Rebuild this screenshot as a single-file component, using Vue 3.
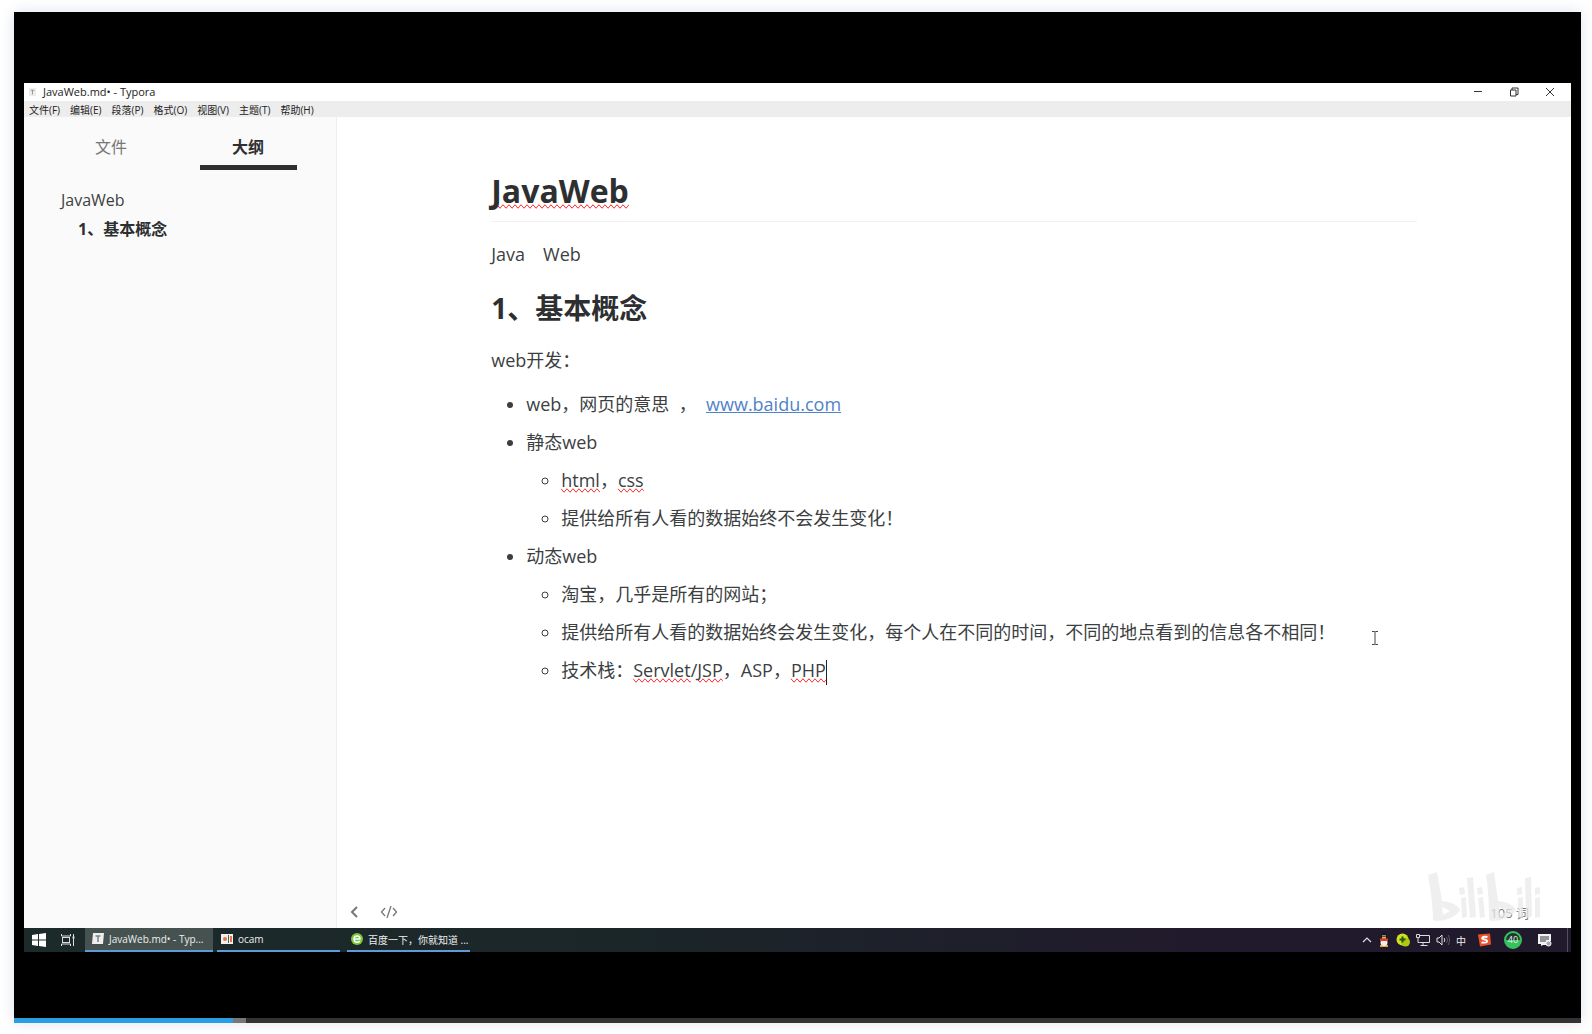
<script setup>
const menus = ['文件(F)', '编辑(E)', '段落(P)', '格式(O)', '视图(V)', '主题(T)', '帮助(H)']
const played = 14
const buffered = 1
</script>

<template>
  <div class="page">
    <section class="player">
      <div class="desktop">
        <header class="titlebar">
          <svg class="app-icon" viewBox="0 0 10 12"><path d="M0 0h10v12H0z" fill="#ededed" /><path d="M2.500 3.500h5M5 3.500v6" stroke="#777" fill="none" /></svg>
          <span class="title">JavaWeb.md• - Typora</span>
          <div class="controls">
            <button aria-label="最小化"><svg viewBox="0 0 10 10"><path d="M1 4.500h8" /></svg></button>
            <button aria-label="还原"><svg viewBox="0 0 10 10"><path d="M1.500 3h5.500v6H1.500zM3 3V1h6v6.500H7" /></svg></button>
            <button aria-label="关闭"><svg viewBox="0 0 10 10"><path d="M1 1l8 8M9 1L1 9" /></svg></button>
          </div>
        </header>
        <nav class="menubar">
          <button v-for="m in menus" :key="m">{{ m }}</button>
        </nav>
        <div class="body">
          <aside class="sidebar">
            <div class="tabs">
              <button>文件</button>
              <button class="active">大纲</button>
            </div>
            <ul class="outline">
              <li>JavaWeb</li>
              <li class="current">1、基本概念</li>
            </ul>
          </aside>
          <main class="editor">
            <article>
              <h1><span class="typo">JavaWeb</span></h1>
              <p>Java　Web</p>
              <h2>1、基本概念</h2>
              <p>web开发：</p>
              <ul>
                <li>web，网页的意思&nbsp; ，&nbsp; <a href="#">www.baidu.com</a></li>
                <li>静态web
                  <ul>
                    <li><span class="typo">html</span>，<span class="typo">css</span></li>
                    <li>提供给所有人看的数据始终不会发生变化！</li>
                  </ul>
                </li>
                <li>动态web
                  <ul>
                    <li>淘宝，几乎是所有的网站；</li>
                    <li class="hovered">提供给所有人看的数据始终会发生变化，每个人在不同的时间，不同的地点看到的信息各不相同！<svg class="ibeam" viewBox="0 0 8 14"><path d="M1 .5h2.500L4 1l.5-.5H7M1 13.500h2.500L4 13l.5.5H7M4 1v12" /></svg></li>
                    <li>技术栈：<span class="typo">Servlet</span>/<span class="typo">JSP</span>，ASP，<span class="typo">PHP</span><i class="caret"></i></li>
                  </ul>
                </li>
              </ul>
            </article>
            <footer class="status">
              <button aria-label="侧边栏"><svg width="8" height="12" viewBox="0 0 8 12"><path d="M7 1L2 6l5 5" stroke-width="2" /></svg></button>
              <button aria-label="源代码模式"><svg width="18" height="12" viewBox="0 0 18 12"><path d="M5 2L1.500 6 5 10M13 2l3.500 4L13 10M11 0L7 12" stroke-width="1.300" /></svg></button>
              <span class="count">105 词</span>
            </footer>
            <svg class="watermark" viewBox="0 0 114 50" aria-label="bilibili">
              <g fill="#e9e9e9" fill-opacity=".75">
                <path fill-rule="evenodd" d="M0 3L9 0l5 29c10 1 17 5 18 9-3 6-13 11-24 11L5 48C5 32 2 15 0 3zM14 35l1 8 7-4z" />
                <path d="M31 16l5-1 1 7-5 1zM33 26l5-1 1 20-5 1zM39 6l6-1 3 40-6 1zM49 16l5-1 1 7-5 1zM50 26l5-1 2 20-5 1z" />
                <path fill-rule="evenodd" d="M58 3l8-3 4 29c10 1 17 5 18 9-3 6-13 11-24 11l-3-1c0-16-1-33-3-45zM71 35l1 8 7-4z" />
                <path d="M89 16l5-1v7l-5 1zM90 26l5-1v20l-5 1zM97 6l6-1 1 40-6 1zM107 16l5-1v7l-5 1zM107 26l5-1v20l-5 1z" />
              </g>
            </svg>
          </main>
        </div>
        <footer class="taskbar">
          <button class="launcher" aria-label="开始"><svg width="14" height="14" viewBox="0 0 14 14" fill="#fff"><path d="M0 2l6-1v5.500H0zM7 1l7-1v6.500H7zM0 7.500h6V13l-6-1zM7 7.500h7V14l-7-1z" /></svg></button>
          <button class="launcher" aria-label="任务视图"><svg width="14" height="14" viewBox="0 0 14 14" fill="none" stroke="#ddd"><path d="M.5 1v2h9V1M.5 13v-2h9v2M1.500 4v6M8.500 4v6M1.500 4.500h7v5h-7zM12.500 1v12" /><path d="M11.500 4.500h2" stroke-width="2" /></svg></button>
          <button class="task active"><svg width="12" height="12" viewBox="0 0 12 12"><path d="M1 0h11l-1 11H0z" fill="#eee" /><path d="M3.500 3h5M6 3v6" stroke="#7b8483" stroke-width="1.500" /></svg>JavaWeb.md• - Typ...</button>
          <button class="task"><svg width="12" height="12" viewBox="0 0 12 12"><path d="M0 1h12v10H0z" fill="#f3efec" /><path d="M7 2h1v8H7z" fill="#465" /><circle cx="4" cy="6" r="2" fill="#e27446" /><path d="M9 3h2v6H9z" fill="#e27446" /></svg>ocam</button>
          <button class="task"><svg width="12" height="12" viewBox="0 0 12 12"><circle cx="6" cy="6" r="6" fill="#79c63c" /><path d="M3 6h6c0-4-6-4-6 0s4 4 6 2" fill="none" stroke="#fff" stroke-width="1.500" /></svg>百度一下，你就知道 ...</button>
          <div class="tray">
            <svg class="w10" viewBox="0 0 10 12"><path d="M1 8l4-4 4 4" fill="none" stroke="#ddd" stroke-width="1.200" /></svg>
            <svg class="w12" viewBox="0 0 12 14"><path d="M2 12h8v2H2z" fill="#e8a33a" /><path d="M6 0C3 0 3 3 3 5L0 9l2 1h8l2-1-3-4c0-2 0-5-3-5z" fill="#161616" /><ellipse cx="6" cy="9.500" rx="3.500" ry="3.500" fill="#eee" /><path d="M2 5.500h8v2.500H2z" fill="#e43a2c" /><path d="M4.500 2h1v1.500h-1zM6.500 2h1v1.500h-1z" fill="#fff" /><path d="M4 4h4v1.500H4z" fill="#f4b642" /></svg>
            <svg class="w14" viewBox="0 0 14 14"><circle cx="6.500" cy="6.500" r="6" fill="#d5e01f" /><circle cx="9.500" cy="9" r="4.500" fill="#b5c810" /><path d="M6.500 3.500v6M3.500 6.500h6" stroke="#1b5b1b" stroke-width="2" /></svg>
            <svg class="w14" viewBox="0 0 14 12" fill="none" stroke="#ddd"><path d="M4 1.500h9.500v7H3.500M7 9v2M4.500 11.500h7M.5.5h3v3h-3zM2 4v4.500h1.500" /></svg>
            <svg class="w14" viewBox="0 0 14 12" fill="none" stroke="#ddd"><path d="M1 4h2l3-3v10L3 8H1zM8 4c1 1 1 3 0 4" /><path d="M10 3c2 2 2 4 0 6M12 1c2 3 2 7 0 10" stroke="#665f70" /></svg>
            <span class="ime">中</span>
            <svg class="w13" viewBox="0 0 13 13"><path d="M0 1l12-1 1 11-11 2z" fill="#e8512a" /><path d="M9.500 3.500c-6-1-7 2-3 2.500s4 4-3 3" fill="none" stroke="#fff" stroke-width="1.800" /></svg>
            <span class="badge">40</span>
            <svg class="w14" viewBox="0 0 14 14"><path d="M0 1h13v7H9v4H5L3 13v-2H0z" fill="#f1f1f1" /><path d="M2 4h9M2 6h9M2 8h6" stroke="#3a3442" /><circle cx="10.500" cy="10.500" r="2.500" fill="#aaa6af" stroke="#fff" /></svg>
            <i class="peek"></i>
          </div>
        </footer>
      </div>
      <div class="progress">
        <div class="played" :style="{ width: played + '%' }"></div>
        <div class="buffered" :style="{ width: buffered * 0.8 + '%' }"></div>
      </div>
    </section>
  </div>
</template>

<style>
body {
  margin: 0;
  background: #fff;
}
</style>

<style scoped>
* {
  box-sizing: border-box;
}
.page {
  display: flex;
  flex-direction: column;
  min-height: 100vh;
  padding: 12px 11px 11px 14px;
  font-family: "Open Sans", "Noto Sans CJK SC", sans-serif;
  color: #3c3f42;
}
button {
  border: 0;
  padding: 0;
  background: none;
  font: inherit;
  color: inherit;
}
svg {
  flex: none;
}
.player {
  flex: 1;
  display: flex;
  flex-direction: column;
  background: #000;
  box-shadow: 0 0 14px #dfe2ec;
}
.desktop {
  flex: 1;
  display: flex;
  flex-direction: column;
  margin: 71px 10px 66px;
  background: #fff;
}
.titlebar {
  display: flex;
  align-items: center;
  height: 18px;
  padding-left: 5px;
  font-size: 11px;
  line-height: 18px;
  color: #222;
}
.app-icon {
  width: 7px;
  height: 10px;
  margin-right: 7px;
}
.controls {
  display: flex;
  margin-left: auto;
  padding-right: 3px;
}
.controls button {
  display: flex;
  justify-content: center;
  align-items: center;
  width: 36px;
  height: 16px;
}
.controls svg {
  width: 10px;
  height: 10px;
  fill: none;
  stroke: #333;
}
.menubar {
  display: flex;
  gap: 10px;
  height: 16px;
  padding-left: 5px;
  background: #ededed;
  font-size: 10px;
  line-height: 18px;
  color: #222;
}
.body {
  flex: 1;
  display: flex;
}
.sidebar {
  width: 313px;
  background: #fafafa;
  border-right: 1px solid #eee;
}
.tabs {
  display: flex;
  justify-content: center;
  gap: 40px;
  padding: 13px 1px 0 0;
}
.tabs button {
  width: 97px;
  height: 40px;
  border-bottom: 5px solid transparent;
  font-size: 16px;
  line-height: 35px;
  color: #777;
}
.tabs .active {
  border-color: #2d2f31;
  font-weight: 700;
  color: #2d2f31;
}
.outline {
  list-style: none;
  margin: 16px 0 0;
  padding: 0 0 0 37px;
  font-size: 16px;
  line-height: 29px;
}
.current {
  padding-left: 17px;
  font-weight: 700;
  color: #2d2f31;
}
.editor {
  position: relative;
  flex: 1;
  display: flex;
  flex-direction: column;
}
article {
  flex: 1;
  width: 75%;
  margin: 0 auto;
  padding-top: 48px;
  font-size: 18px;
  line-height: 30px;
}
h1,
h2 {
  margin: 0;
  color: #2d2f31;
}
h1 {
  height: 57px;
  border-bottom: 1px solid #f2f2f2;
  font-size: 32px;
  line-height: 52px;
}
h2 {
  margin-top: 19px;
  font-size: 28px;
  line-height: 40px;
}
p {
  margin: 17px 0 0;
}
ul {
  margin: 14px 0 0;
  padding-left: 35px;
}
li ul {
  margin-top: 8px;
}
article li + li {
  margin-top: 8px;
}
a {
  color: #4f83c8;
}
.typo {
  text-decoration-line: spelling-error;
}
.hovered {
  white-space: nowrap;
}
.ibeam {
  width: 8px;
  height: 14px;
  margin-left: 36px;
  vertical-align: -6px;
  fill: none;
  stroke: #444;
}
.caret {
  display: inline-block;
  width: 1px;
  height: 25px;
  background: #222;
  vertical-align: middle;
}
.status {
  display: flex;
  align-items: center;
  gap: 22px;
  height: 32px;
  padding: 0 42px 0 13px;
}
.status button {
  display: flex;
}
.status svg {
  fill: none;
  stroke: #777;
}
.count {
  margin-left: auto;
  font-size: 13px;
  color: #777;
}
.watermark {
  position: absolute;
  right: 29px;
  bottom: 6px;
  width: 114px;
  height: 50px;
}
.taskbar {
  display: flex;
  height: 24px;
  background: linear-gradient(90deg, #1c2a2a, #1b2629 40%, #211a2c 75%);
  font-size: 10px;
  color: #eee;
}
.launcher {
  display: flex;
  justify-content: center;
  align-items: center;
  width: 29px;
}
.launcher + .task {
  margin-left: 3px;
  width: 128px;
}
.task {
  display: flex;
  align-items: center;
  gap: 5px;
  width: 123px;
  margin-left: 4px;
  padding-left: 4px;
  border-bottom: 2px solid #5f9bd6;
  white-space: nowrap;
}
.task + .task + .task {
  margin-left: 7px;
}
.task.active {
  padding-left: 7px;
  background: #465250;
}
.tray {
  display: flex;
  align-items: center;
  gap: 6px;
  margin-left: auto;
  padding-right: 3px;
}
.tray svg {
  height: 14px;
}
.w10 {
  width: 10px;
}
.w12 {
  width: 12px;
}
.w13 {
  width: 13px;
  margin-left: 6px;
}
.w14 {
  width: 14px;
}
.badge {
  width: 18px;
  height: 18px;
  margin: 0 10px 0 7px;
  border-radius: 50%;
  background: linear-gradient(#1f3a30 50%, #35c25c 50%);
  border: 2px solid #35c25c;
  font-size: 9px;
  line-height: 14px;
  text-align: center;
}
.peek {
  width: 1px;
  height: 24px;
  margin-left: 9px;
  background: #55505e;
}
.progress {
  display: flex;
  height: 5px;
  background: #333;
}
.played {
  background: #279fe2;
}
.buffered {
  background: #777;
}
</style>
